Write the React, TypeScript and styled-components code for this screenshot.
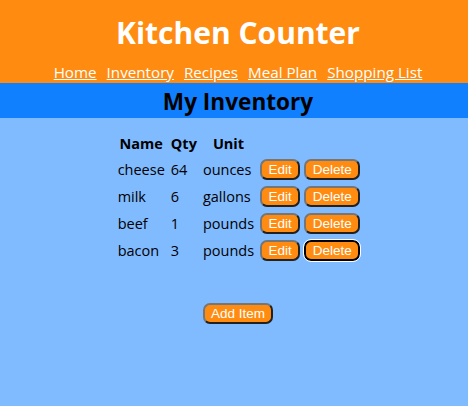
import React from "react";
import styled, { createGlobalStyle, css } from "styled-components";

const GlobalStyle = createGlobalStyle`
  html, body { margin: 0; padding: 0; }
  body {
    background: #80bbff;
    font-family: "Open Sans", "Noto Sans", sans-serif;
    min-height: 406px;
  }
`;

const Header = styled.header`
  background: #ff8c10;
  display: flex;
  flex-direction: column;
  align-items: center;
  height: 83px;
  box-sizing: border-box;
  padding-top: 12px;
  padding-left: 8px;
`;

const Title = styled.h1`
  margin: 0;
  color: #fff;
  font-size: 30px;
  font-weight: 700;
  line-height: 42px;
`;

const Nav = styled.nav`
  display: flex;
  gap: 10px;
  margin-top: 8px;
`;

const NavLink = styled.a`
  color: #fff;
  font-size: 15.2px;
  line-height: 20px;
  text-decoration: underline;
`;

const Band = styled.div`
  background: #1080ff;
  height: 35px;
  display: flex;
  align-items: center;
  justify-content: center;
  padding-left: 8px;
`;

const BandTitle = styled.h2`
  margin: 0 0 -2px;
  font-size: 22.6px;
  font-weight: 700;
  color: #000;
`;

const Main = styled.main`
  display: flex;
  flex-direction: column;
  align-items: center;
  padding-top: 11px;
  padding-left: 8px;
`;

const Table = styled.table`
  border-spacing: 2px;
  font-size: 14.5px;
  color: #000;
  margin-left: 6px;
`;

const Th = styled.th`
  font-weight: 700;
  padding: 1px 2px;
  text-align: center;
  height: 22px;
`;

const Td = styled.td`
  padding: 1px 2px;
  height: 23px;
  white-space: nowrap;
`;

const Button = styled.button<{ $focused?: boolean }>`
  background: #ff8c10;
  color: #fff;
  font-family: "Liberation Sans", Arial, sans-serif;
  font-size: 13.5px;
  line-height: 15px;
  border: 2px outset #767676;
  border-radius: 7px;
  padding: 1px 6.5px;
  margin-right: 4px;
  cursor: pointer;
  ${(p) =>
    p.$focused &&
    css`
      border: 2px solid #000;
      outline: 1px solid #fff;
    `}
`;

const AddButton = styled(Button)`
  margin-top: 38px;
  margin-right: 0;
  padding: 1px 6px;
`;

const items = [
  { name: "cheese", qty: 64, unit: "ounces" },
  { name: "milk", qty: 6, unit: "gallons" },
  { name: "beef", qty: 1, unit: "pounds" },
  { name: "bacon", qty: 3, unit: "pounds" },
];

export default function App() {
  return (
    <>
      <GlobalStyle />
      <Header>
        <Title>Kitchen Counter</Title>
        <Nav>
          <NavLink href="#">Home</NavLink>
          <NavLink href="#">Inventory</NavLink>
          <NavLink href="#">Recipes</NavLink>
          <NavLink href="#">Meal Plan</NavLink>
          <NavLink href="#">Shopping List</NavLink>
        </Nav>
      </Header>
      <Band>
        <BandTitle>My Inventory</BandTitle>
      </Band>
      <Main>
        <Table>
          <thead>
            <tr>
              <Th>Name</Th>
              <Th>Qty</Th>
              <Th>Unit</Th>
              <Th></Th>
            </tr>
          </thead>
          <tbody>
            {items.map((it, i) => (
              <tr key={it.name}>
                <Td>{it.name}</Td>
                <Td>{it.qty}</Td>
                <Td>{it.unit}</Td>
                <Td>
                  <Button>Edit</Button>
                  <Button $focused={i === 3}>Delete</Button>
                </Td>
              </tr>
            ))}
          </tbody>
        </Table>
        <AddButton>Add Item</AddButton>
      </Main>
    </>
  );
}
